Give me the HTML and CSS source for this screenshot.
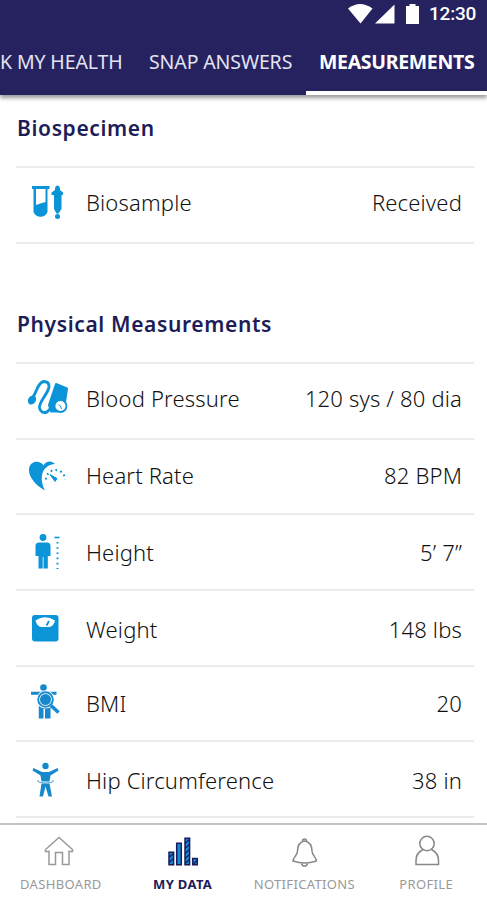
FILE: index.html
```html
<!DOCTYPE html>
<html lang="en">
	<head>
		<meta charset="utf-8"/>
		<title>My Data</title>
		<link rel="stylesheet" href="styles.css">
	</head>
	<body>
		<header class="topbar">
			<div class="status">
				<svg class="signals" width="72" height="28" viewBox="0 0 72 28" fill="#fff">
					<path d="M0 8.500Q12 -0.500 24.500 8.500L12.500 23.500Z"/>
					<path d="M27 23.500L46.500 4.500V23.500Z"/>
					<path d="M58 6H61.500V4H67.500V6H71V24H58Z"/>
				</svg>
				<span class="clock">12:30</span>
			</div>
			<nav class="tabs">
				<a class="tab tab-first">K MY HEALTH</a>
				<a class="tab tab-snap">SNAP ANSWERS</a>
				<a class="tab tab-active">MEASUREMENTS</a>
			</nav>
		</header>
		<main>
			<section class="group group-bio">
				<h2>Biospecimen</h2>
				<ul>
					<li class="row up">
						<svg class="icon" viewBox="0 0 60 60" fill="#0c94d8">
							<path fill-rule="evenodd" d="M17 14H34.500V17H32.500V40A7.500 7.500 0 0 1 18.500 40V17H17ZM21 17V33Q25 31.500 30.500 30V17Z"/>
							<path d="M42.500 13.500Q45.500 14 45 18L48 20.500V23H46.500V37L43.500 41.500H41.500L39 37V23H36.500V20.500L40 18Q39.500 14 42.500 13.500Z"/>
							<circle cx="42.500" cy="44.500" r="2.500"/>
						</svg>
						<span class="name">Biosample</span><span class="value">Received</span>
					</li>
				</ul>
			</section>
			<section class="group group-physical">
				<h2>Physical Measurements</h2>
				<ul>
					<li class="row up">
						<svg class="icon" viewBox="0 0 60 60" fill="#0c94d8">
							<path d="M41 16L52 20.500L50 34L43 43.500H36L34 37Z" stroke="#0c94d8" stroke-width="2" stroke-linejoin="round"/>
							<path d="M17 30C22 25 22 15 28.500 13.500Q34.500 13.500 34 19C33 26 23.500 34 24.500 40Q26 46 32 44L38 38" fill="none" stroke="#0c94d8" stroke-width="2.900"/>
							<ellipse cx="17" cy="32" rx="3.800" ry="4.800" transform="rotate(35 17 32)"/>
							<circle cx="45.500" cy="38" r="6" fill="#fff" stroke="#0c94d8" stroke-width="1.800"/>
							<path d="M43.500 36.500L45.500 38L46.500 41" fill="none" stroke="#0c94d8"/>
						</svg>
						<span class="name">Blood Pressure</span><span class="value">120 sys / 80 dia</span>
					</li>
					<li class="row slight">
						<svg class="icon" viewBox="0 0 60 60" fill="#0c94d8">
							<path d="M30 45.500C20 40 14 32 14 25C14 15.500 25 14.500 28.500 20.500C31 15.500 37 15.500 40 19C28 20 23 31 30 45.500Z"/>
							<path d="M31 34.500A9.500 9.500 0 0 1 50 34.500" fill="none" stroke="#0c94d8" stroke-width="2" stroke-dasharray="1.800 3.100"/>
							<path d="M35 29.500L42 33.500L40 36.500Z" stroke="#0c94d8"/>
						</svg>
						<span class="name">Heart Rate</span><span class="value">82 BPM</span>
					</li>
					<li class="row even">
						<svg class="icon" viewBox="0 0 60 60" fill="#0c94d8">
							<circle cx="28" cy="15.500" r="3.400"/>
							<path d="M24 20.500H32Q35.500 20.500 35.500 24V34H32.800V46.500H28.500V35H27.700V46.500H23.500V34H20.500V24Q20.500 20.500 24 20.500Z"/>
							<path d="M39.500 15.500H44.500" stroke="#0c94d8" stroke-width="1.600"/>
							<path d="M42.500 20V47" stroke="#0c94d8" stroke-width="2" stroke-dasharray="1.600 3.600"/>
						</svg>
						<span class="name">Height</span><span class="value">5’ 7”</span>
					</li>
					<li class="row down">
						<svg class="icon" viewBox="0 0 60 60" fill="#0c94d8">
							<rect x="17" y="16" width="26.500" height="26.500" rx="3"/>
							<path d="M20.500 21.500Q30 15 40 21.500Q38.500 28 34 28H26.500Q22 28 20.500 21.500Z" fill="#fff"/>
							<path d="M31.500 26.500L34 22" stroke="#0c94d8" stroke-width="1.800"/>
						</svg>
						<span class="name">Weight</span><span class="value">148 lbs</span>
					</li>
					<li class="row even-up">
						<svg class="icon" viewBox="0 0 60 60" fill="#1689cc">
							<circle cx="28.500" cy="14.500" r="3.300"/>
							<path d="M16 18.800H41.500V21.800H35.500V45.500H30V36H28.500V45.500H23.800V26L22.500 21.800H16Z"/>
							<circle cx="30.500" cy="26.500" r="7.300" fill="#1689cc" stroke="#fff" stroke-width="3.600"/>
							<circle cx="30.500" cy="26.500" r="7.300" fill="none" stroke="#1689cc" stroke-width="1.900"/>
							<path d="M36 32.500L43.500 39.500" stroke="#1689cc" stroke-width="3.500"/>
						</svg>
						<span class="name">BMI</span><span class="value">20</span>
					</li>
					<li class="row down">
						<svg class="icon" viewBox="0 0 60 60" fill="#1689cc">
							<circle cx="30.500" cy="16" r="3.200"/>
							<path d="M18.500 18L27 22H34L42.500 18L43.500 20.500L35.500 25.500L34.500 31.500H26.500L25.500 25.500L17.500 20.500Z"/>
							<path d="M26.500 33.500H34.500L37 46.500H33.500L30.500 36.500L28 46.500H24.500Z"/>
							<path d="M23.500 30Q20 32.500 30.500 33Q41 32.500 37.500 30" fill="none" stroke="#1689cc" stroke-width="0.800"/>
						</svg>
						<span class="name">Hip Circumference</span><span class="value">38 in</span>
					</li>
				</ul>
			</section>
		</main>
		<footer class="bottom">
			<a class="nav nav-dash">
				<svg width="34" height="34" viewBox="0 0 34 34" fill="none" stroke="#999" stroke-width="1.500">
					<path d="M5 15.500V29.500H11.500V17.500H18.500V29.500H25V15.500M5 16.500H1.500V14.500L15 2.500L28.500 14.500V16.500H25"/>
				</svg>
				<span>DASHBOARD</span>
			</a>
			<a class="nav nav-data">
				<svg width="34" height="34" viewBox="0 0 34 34" fill="#138bd6" stroke="#1c1a5a" stroke-width="1.500">
					<path d="M3 17.200H7.600V29.800H3ZM10.700 8.200H15.300V29.800H10.700ZM19 3.200H23.600V29.800H19ZM26.700 23.500H31.300V29.800H26.700Z"/>
					<path d="M3 22.500L7.500 18.500M3 27.500L7.500 23.500M19 8.500L23.500 4.500M19 13.500L23.500 9.500M19 18.500L23.500 14.500M19 23.500L23.500 19.500M19 28.500L23.500 24.500M27 29.500L31 25.500" stroke-width="1.200"/>
				</svg>
				<span>MY DATA</span>
			</a>
			<a class="nav nav-note">
				<svg width="34" height="34" viewBox="0 0 34 34" fill="none" stroke="#888" stroke-width="1.500">
					<path d="M17.500 6C12 7 10.500 11 10.500 16C10.500 20.500 6 22.500 6 26Q17.500 30 29.500 26C29.500 22.500 25 20.500 25 16C25 11 23.500 7 17.500 6Z"/>
					<path d="M15.500 6Q15.500 4 17.500 4Q19.500 4 19.500 6M14.500 28.500Q15 31 17.500 31Q20 31 20.500 28.500"/>
				</svg>
				<span>NOTIFICATIONS</span>
			</a>
			<a class="nav nav-profile">
				<svg width="34" height="34" viewBox="0 0 34 34" fill="none" stroke="#888" stroke-width="1.500">
					<circle cx="18" cy="8.500" r="7.200"/>
					<path d="M14 14.500Q7 18 7 25.500V29.500H29.500V25.500Q29.500 18 22.500 14.500"/>
				</svg>
				<span>PROFILE</span>
			</a>
		</footer>
	</body>
</html>
```
FILE: styles.css
```css
* {
	box-sizing: border-box;
}
body {
	margin: 0;
	width: 487px;
	height: 900px;
	overflow: hidden;
	display: flex;
	flex-direction: column;
	background-color: #fff;
	font-family: "Noto Sans", "Open Sans", sans-serif;
	color: #111;
}
h2, ul {
	margin: 0;
	padding: 0;
	list-style: none;
}
.topbar {
	flex: none;
	height: 95px;
	background-color: #26225f;
	color: #fff;
	box-shadow: 0 3px 4px rgba(0, 0, 0, 0.4);
}
.status {
	height: 28px;
	display: flex;
	justify-content: flex-end;
	padding-right: 10px;
}
.clock {
	width: 48px;
	margin-left: 9px;
	font-family: Roboto, sans-serif;
	font-size: 19px;
	font-weight: 500;
	letter-spacing: -0.2px;
	line-height: 28px;
	white-space: nowrap;
}
.tabs {
	display: flex;
	height: 67px;
	font-size: 19.5px;
	letter-spacing: -0.12px;
	line-height: 67px;
	white-space: nowrap;
}
.tab {
	color: #e4e4f2;
	font-weight: 400;
}
.tab-first {
	width: 135px;
}
.tab-snap {
	width: 171px;
	padding-left: 14px;
}
.tab-active {
	width: 181px;
	padding-left: 13px;
	color: #fff;
	font-weight: 700;
	letter-spacing: -0.32px;
	border-bottom: 4px solid #fff;
}
.group h2 {
	margin-bottom: 23px;
	padding-left: 17px;
	font-size: 21px;
	font-weight: 600;
	letter-spacing: 0.63px;
	line-height: 30px;
	color: #201c58;
}
.group-bio {
	padding-top: 18px;
	height: 214px;
}
.group ul {
	margin: 0 13px 0 16px;
	border-bottom: 2px solid #ebebeb;
}
.row {
	display: flex;
	align-items: center;
	height: 75.7px;
	border-top: 2px solid #ebebeb;
	font-size: 22px;
	font-weight: 300;
	letter-spacing: 0.17px;
	line-height: 30px;
	white-space: nowrap;
}
.up {
	padding-bottom: 6px;
}
.slight {
	padding-bottom: 4px;
}
.even-up {
	padding-bottom: 1.5px;
}
.down {
	padding-top: 2px;
}
.icon {
	flex: none;
	width: 60px;
	height: 60px;
	margin: 0 11px 0 -1px;
}
.value {
	margin-left: auto;
	margin-right: 12px;
}
.bottom {
	position: absolute;
	left: 0;
	top: 823px;
	width: 487px;
	height: 77px;
	display: flex;
	justify-content: space-between;
	padding-top: 10px;
	background-color: #fff;
	border-top: 2px solid #c4c4c4;
}
.nav {
	width: 122px;
	display: flex;
	flex-direction: column;
	align-items: center;
	font-size: 13px;
	letter-spacing: 0.35px;
	line-height: 18px;
	color: #999;
}
.nav span {
	margin-top: 6px;
}
.nav-data {
	color: #201c58;
	font-weight: 700;
}
```
